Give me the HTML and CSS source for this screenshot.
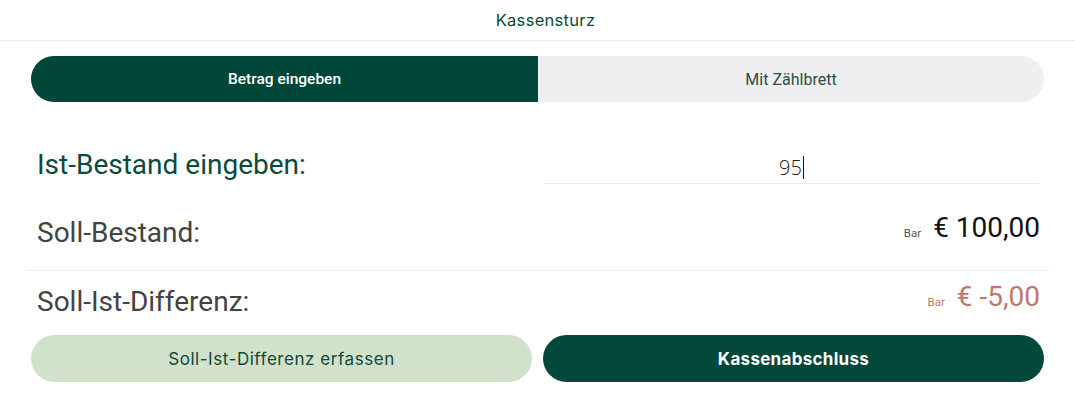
FILE: index.html
```html
<!DOCTYPE html>
<html>
<head>
  <meta name="viewport" content="width=device-width, initial-scale=1.0">
  <link rel="stylesheet" href="styles.css">
</head>
<body>

<div class="top_bar">Kassensturz</div>

<div class="page">

  <div class="mode_switch">
    <div class="mode_tab mode_active">Betrag eingeben</div>
    <div class="mode_tab">Mit Zählbrett</div>
  </div>

  <div class="count_rows">
    <div class="count_row row_input">
      <div class="row_label label_green">Ist-Bestand eingeben:</div>
      <div class="amount_field"><span class="amount_text">95</span><span class="caret"></span></div>
    </div>

    <div class="count_row row_target">
      <div class="row_label">Soll-Bestand:</div>
      <div class="row_value">
        <span class="value_tag">Bar</span>
        <span class="value_sum">€ 100,00</span>
      </div>
    </div>

    <div class="count_row row_diff">
      <div class="row_label">Soll-Ist-Differenz:</div>
      <div class="row_value value_minus">
        <span class="value_tag">Bar</span>
        <span class="value_sum">€ -5,00</span>
      </div>
    </div>
  </div>

  <div class="action_bar">
    <div class="action_btn btn_light">Soll-Ist-Differenz erfassen</div>
    <div class="action_btn btn_dark">Kassenabschluss</div>
  </div>

</div>

</body>
</html>
```

FILE: styles.css
```css
html {
  height: 100%;
}
body {
  height: 100%;
  margin: 0;
  background: #fff;
  font-family: Roboto, "Noto Sans", sans-serif;
}

.top_bar {
  height: 41px;
  line-height: 41px;
  box-sizing: border-box;
  border-bottom: 1px solid #ededed;
  padding-left: 16px;
  text-align: center;
  font-family: Inter, "Noto Sans", sans-serif;
  font-size: 16.5px;
  letter-spacing: 0.3px;
  color: #0d4a3b;
}

.page {
  padding: 15px 31px 0;
}

.mode_switch {
  display: flex;
  height: 46px;
  border-radius: 23px;
  overflow: hidden;
  background: #efeff1;
}

.mode_tab {
  flex: 1;
  display: flex;
  align-items: center;
  justify-content: center;
  font-size: 16px;
  color: #2b4d42;
}

.mode_active {
  flex: 0 0 507px;
  background: #00473a;
  color: #fff;
  font-weight: 500;
  font-size: 15.5px;
}

.count_rows {
  margin: 0 -5px;
}

.count_row {
  display: flex;
  justify-content: space-between;
  align-items: flex-end;
  padding: 0 9px 0 11px;
}

.row_label {
  font-size: 28px;
  line-height: 30px;
  color: #434343;
}

.label_green {
  color: #0b4a3b;
}

.row_input {
  height: 82px;
}

.row_input .row_label {
  margin-bottom: 4px;
}

.amount_field {
  width: 495px;
  height: 40px;
  box-sizing: border-box;
  border-bottom: 1px solid #ececec;
  display: flex;
  align-items: center;
  justify-content: center;
  margin-right: 1px;
}

.amount_text {
  font-family: "Open Sans", sans-serif;
  font-weight: 300;
  font-size: 20px;
  color: #222;
  margin-top: 7px;
}

.caret {
  display: inline-block;
  width: 1px;
  height: 23px;
  background: #111;
  margin-left: 1px;
  margin-top: 7px;
}

.row_target {
  height: 87px;
  box-sizing: border-box;
  padding-bottom: 22px;
  border-bottom: 1px solid #efefef;
}

.row_diff {
  padding-top: 11px;
}

.row_value {
  display: flex;
  align-items: baseline;
  gap: 12px;
  line-height: 30px;
  color: #111;
}

.value_tag {
  font-size: 11.5px;
  color: #555;
}

.value_sum {
  font-size: 28px;
}

.value_minus,
.value_minus .value_tag {
  color: #c0786d;
}

.action_bar {
  display: flex;
  gap: 11px;
  margin-top: 18px;
}

.action_btn {
  flex: 1;
  height: 47px;
  border-radius: 24px;
  display: flex;
  align-items: center;
  justify-content: center;
  font-family: Inter, "Noto Sans", sans-serif;
  font-size: 17px;
  letter-spacing: 0.55px;
}

.btn_light {
  background: #d1e1ca;
  color: #0d4a3b;
}

.btn_dark {
  background: #02483b;
  color: #fff;
  font-weight: 700;
  letter-spacing: 0.3px;
}
```
